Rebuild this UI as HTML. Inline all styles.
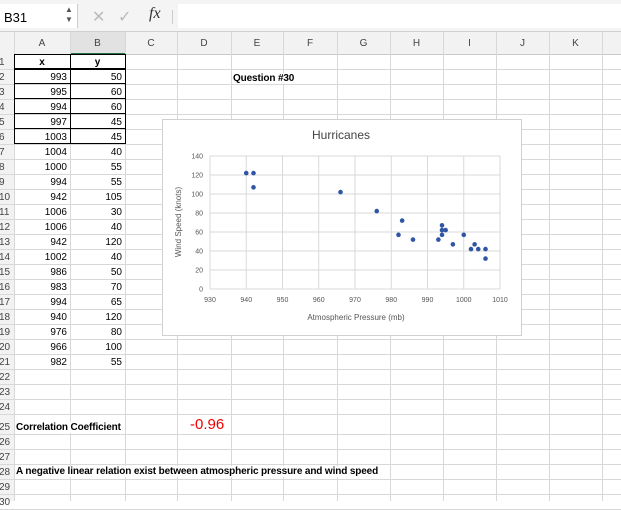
<!DOCTYPE html>
<html><head><meta charset="utf-8"><style>
body{margin:0;width:621px;height:501px;overflow:hidden;background:#fff;font-family:"Liberation Sans",sans-serif;position:relative}
.a{position:absolute}
.t{position:absolute;font-size:10px;color:#000;white-space:nowrap}
.b{font-weight:bold}
.w{background:#fff;font-size:10px;letter-spacing:-0.13px}
</style></head><body>
<div class="a" style="left:0;top:0;width:621px;height:31px;background:#f4f4f4;border-bottom:1px solid #cfcfcf"></div>
<div class="a" style="left:0;top:4px;width:77px;height:24px;background:#fff;border-right:1px solid #ccc"></div>
<div class="t" style="left:4px;top:10px;font-size:13px">B31</div>
<div class="t" style="left:65px;top:5px;font-size:8px;color:#555">▲</div>
<div class="t" style="left:65px;top:15px;font-size:8px;color:#555">▼</div>
<div class="t" style="left:92px;top:7px;font-size:16px;color:#bbb">✕</div>
<div class="t" style="left:118px;top:7px;font-size:16px;color:#bbb">✓</div>
<div class="t" style="left:149px;top:5px;font-size:16px;font-style:italic;font-family:'Liberation Serif',serif;color:#333">fx</div>
<div class="a" style="left:172px;top:10px;width:1px;height:14px;background:#ccc"></div>
<div class="a" style="left:178px;top:4px;width:443px;height:24px;background:#fff"></div>
<div id="g"></div>
<svg class="a" style="left:0;top:0" width="621" height="501" id="s"></svg>
<script>
var cols=[0,14,70,125,177,231,283,337,390,443,496,549,602,640];
var L="ABCDEFGHIJK";
var h='';
h+='<div class="a" style="left:0;top:32px;width:621px;height:22px;background:#f2f2f2;border-bottom:1px solid #c8c8c8"></div>';
h+='<div class="a" style="left:70px;top:32px;width:55px;height:21px;background:#e2e2e2;border-bottom:2px solid #217346"></div>';
for(var i=1;i<cols.length-1;i++){
 h+='<div class="a" style="left:'+cols[i]+'px;top:32px;width:1px;height:469px;background:#d8d8d8"></div>';
 if(i<=11)h+='<div class="t" style="left:'+cols[i]+'px;width:'+(cols[i+1]-cols[i])+'px;text-align:center;top:38px;color:#444">'+L[i-1]+'</div>';
}
var ys=[54];for(var r=1;r<=30;r++){ys.push(ys[r-1]+(r==25?20:15));}
h+='<div class="a" style="left:0;top:54px;width:14px;height:447px;background:#f2f2f2"></div>';
for(var r=1;r<=30;r++){
 h+='<div class="a" style="left:0;top:'+ys[r]+'px;width:621px;height:1px;background:#d8d8d8"></div>';
 h+='<div class="t" style="left:-1px;top:'+(ys[r]-12)+'px;color:#444">'+r+'</div>';
}
var d=[["x","y"],[993,50],[995,60],[994,60],[997,45],[1003,45],[1004,40],[1000,55],[994,55],[942,105],[1006,30],[1006,40],[942,120],[1002,40],[986,50],[983,70],[994,65],[940,120],[976,80],[966,100],[982,55]];
for(var r=0;r<21;r++){
 var y=ys[r];
 if(r==0){
  h+='<div class="t b" style="left:14px;width:56px;text-align:center;top:'+(y+3)+'px">x</div><div class="t b" style="left:70px;width:55px;text-align:center;top:'+(y+3)+'px">y</div>';
 }else{
  h+='<div class="t" style="left:14px;width:53px;text-align:right;top:'+(y+3)+'px">'+d[r][0]+'</div><div class="t" style="left:70px;width:52px;text-align:right;top:'+(y+3)+'px">'+d[r][1]+'</div>';
 }
 if(r<6) h+='<div class="a" style="left:14px;top:'+(y+14)+'px;width:111px;height:'+(r==0?2:1)+'px;background:#000"></div>';
}
h+='<div class="a" style="left:14px;top:54px;width:111px;height:1px;background:#000"></div>';
h+='<div class="a" style="left:14px;top:54px;width:1px;height:90px;background:#000"></div>';
h+='<div class="a" style="left:70px;top:54px;width:1px;height:90px;background:#000"></div>';
h+='<div class="a" style="left:125px;top:54px;width:1px;height:90px;background:#000"></div>';
h+='<div class="t b w" style="left:233px;top:73px">Question #30</div>';
h+='<div class="t b w" style="left:16px;top:422px;padding-right:1px">Correlation Coefficient</div>';
h+='<div class="t" style="left:190px;top:416px;font-size:15px;color:#e00">-0.96</div>';
h+='<div class="t b w" style="left:16px;top:466px;padding-right:1px">A negative linear relation exist between atmospheric pressure and wind speed</div>';
document.getElementById('g').innerHTML=h;
var s='<rect x="162.5" y="119.5" width="359" height="216" fill="#fff" stroke="#d0d0d0"/>';
s+='<text x="341" y="139" font-size="12" text-anchor="middle" fill="#444" font-family="Liberation Sans">Hurricanes</text>';
function px(x){return 210+(x-930)*290/80}function py(v){return 289-v*133/140}
for(var v=0;v<=140;v+=20){var yy=py(v);s+='<line x1="210" x2="500" y1="'+yy+'" y2="'+yy+'" stroke="#d9d9d9"/>';s+='<text x="203" y="'+(yy+2.5)+'" font-size="7" text-anchor="end" fill="#555" font-family="Liberation Sans">'+v+'</text>';}
for(var x=930;x<=1010;x+=10){var xx=px(x);s+='<line x1="'+xx+'" x2="'+xx+'" y1="156" y2="289" stroke="#d9d9d9"/>';s+='<text x="'+xx+'" y="302" font-size="7" text-anchor="middle" fill="#555" font-family="Liberation Sans">'+x+'</text>';}
s+='<text x="356" y="320" font-size="8" text-anchor="middle" fill="#555" font-family="Liberation Sans">Atmospheric Pressure (mb)</text>';
s+='<text transform="translate(181,222) rotate(-90)" font-size="8" text-anchor="middle" fill="#555" font-family="Liberation Sans">Wind Speed (knots)</text>';
for(var r=1;r<21;r++)s+='<circle cx="'+px(d[r][0])+'" cy="'+py(d[r][1]+2)+'" r="2.3" fill="#2f55a4"/>';
document.getElementById('s').innerHTML=s;
</script>
</body></html>
